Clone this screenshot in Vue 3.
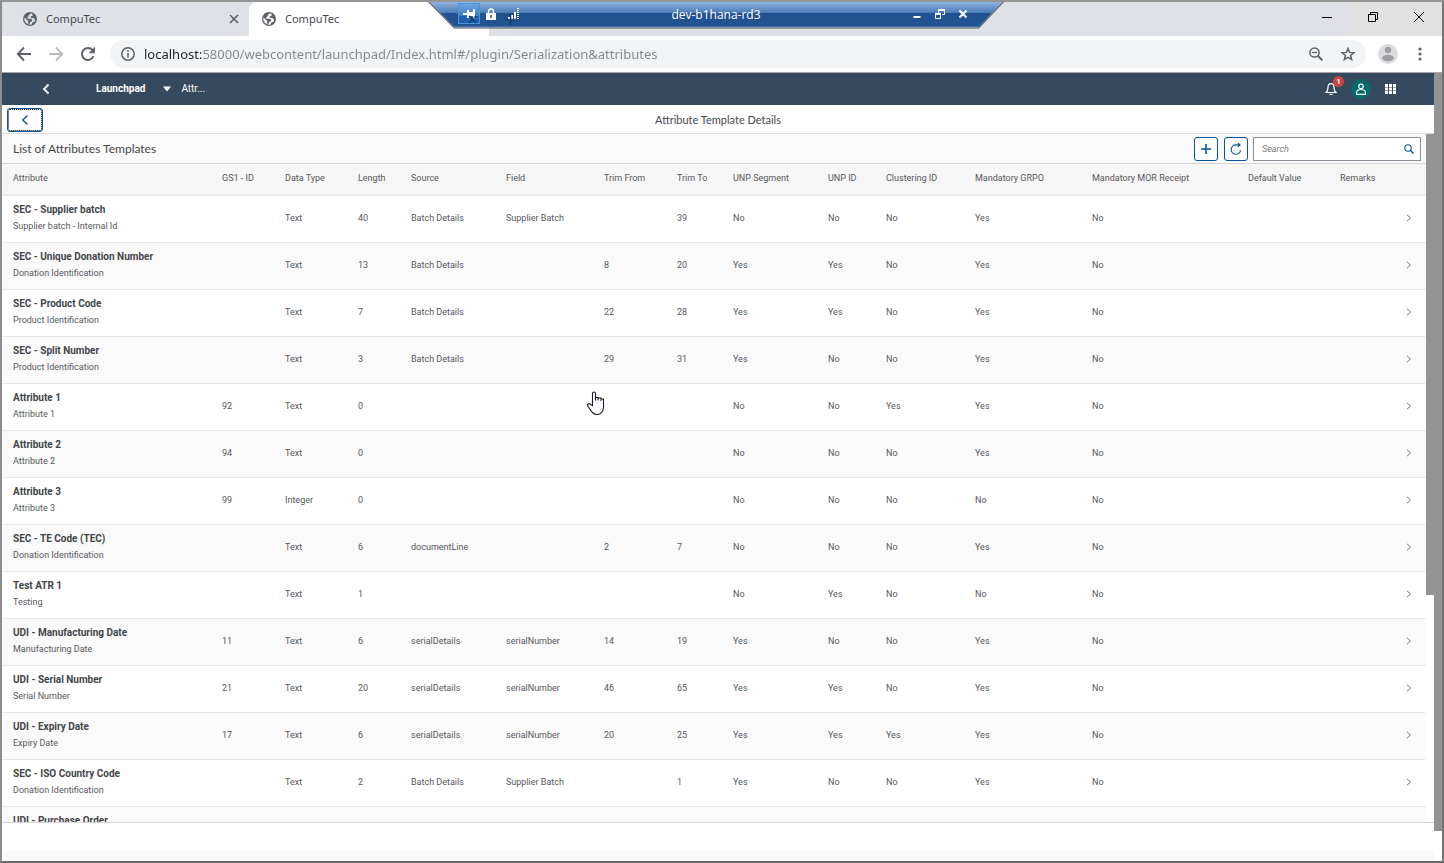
<script setup>
import { ref } from 'vue'

const address = ref('localhost:58000/webcontent/launchpad/Index.html#/plugin/Serialization&attributes')
const query = ref('')

const columns = [
  { label: 'Attribute', width: 216 },
  { label: 'GS1 - ID', width: 63 },
  { label: 'Data Type', width: 73 },
  { label: 'Length', width: 53 },
  { label: 'Source', width: 95 },
  { label: 'Field', width: 98 },
  { label: 'Trim From', width: 73 },
  { label: 'Trim To', width: 56 },
  { label: 'UNP Segment', width: 95 },
  { label: 'UNP ID', width: 58 },
  { label: 'Clustering ID', width: 89 },
  { label: 'Mandatory GRPO', width: 117 },
  { label: 'Mandatory MOR Receipt', width: 156 },
  { label: 'Default Value', width: 92 },
  { label: 'Remarks', width: 58 }
]

const rows = [
  ['SEC - Supplier batch', 'Supplier batch - Internal Id', '', 'Text', '40', 'Batch Details', 'Supplier Batch', '', '39', 'No', 'No', 'No', 'Yes', 'No'],
  ['SEC - Unique Donation Number', 'Donation Identification', '', 'Text', '13', 'Batch Details', '', '8', '20', 'Yes', 'Yes', 'No', 'Yes', 'No'],
  ['SEC - Product Code', 'Product Identification', '', 'Text', '7', 'Batch Details', '', '22', '28', 'Yes', 'Yes', 'No', 'Yes', 'No'],
  ['SEC - Split Number', 'Product Identification', '', 'Text', '3', 'Batch Details', '', '29', '31', 'Yes', 'No', 'No', 'Yes', 'No'],
  ['Attribute 1', 'Attribute 1', '92', 'Text', '0', '', '', '', '', 'No', 'No', 'Yes', 'Yes', 'No'],
  ['Attribute 2', 'Attribute 2', '94', 'Text', '0', '', '', '', '', 'No', 'No', 'No', 'Yes', 'No'],
  ['Attribute 3', 'Attribute 3', '99', 'Integer', '0', '', '', '', '', 'No', 'No', 'No', 'No', 'No'],
  ['SEC - TE Code (TEC)', 'Donation Identification', '', 'Text', '6', 'documentLine', '', '2', '7', 'No', 'No', 'No', 'Yes', 'No'],
  ['Test ATR 1', 'Testing', '', 'Text', '1', '', '', '', '', 'No', 'Yes', 'No', 'No', 'No'],
  ['UDI - Manufacturing Date', 'Manufacturing Date', '11', 'Text', '6', 'serialDetails', 'serialNumber', '14', '19', 'Yes', 'No', 'No', 'Yes', 'No'],
  ['UDI - Serial Number', 'Serial Number', '21', 'Text', '20', 'serialDetails', 'serialNumber', '46', '65', 'Yes', 'Yes', 'No', 'Yes', 'No'],
  ['UDI - Expiry Date', 'Expiry Date', '17', 'Text', '6', 'serialDetails', 'serialNumber', '20', '25', 'Yes', 'Yes', 'Yes', 'Yes', 'No'],
  ['SEC - ISO Country Code', 'Donation Identification', '', 'Text', '2', 'Batch Details', 'Supplier Batch', '', '1', 'Yes', 'No', 'No', 'Yes', 'No'],
  ['UDI - Purchase Order', '', '', '', '', '', '', '', '', '', '', '', '', '']
]
</script>

<template>
  <div class="window">
    <header class="tabs">
      <div class="tab">
        <svg class="globe" viewBox="0 0 14 14"><circle cx="7" cy="7" r="7" fill="#5f6368" /><path d="M7.500 1.400L5.600 3.600l-.4 1.500-1.400.6 1 1h3.400l1.300 1.400-.9 1.500-1.600.3-.3 2.200-.9.5L5 10.400 5.200 9 1.500 5.600 1.300 8l1.600 2.900L6.500 12.700l2.200-.3.6-1.800 2.500-1.100.2-2-1.600-1.500H8L7.600 4.600l1.900-.9V1.800z" fill="#dee1e6" /></svg>
        <button class="tab-name">CompuTec</button>
        <button class="tab-close" aria-label="Close tab"><svg viewBox="0 0 10 10" width="10" height="10"><path d="M1 1l8 8M9 1l-8 8" stroke="#5f6368" stroke-width="1.600" /></svg></button>
      </div>
      <div class="tab active">
        <svg class="globe" viewBox="0 0 14 14"><circle cx="7" cy="7" r="7" fill="#5f6368" /><path d="M7.500 1.400L5.600 3.600l-.4 1.500-1.400.6 1 1h3.400l1.300 1.400-.9 1.500-1.600.3-.3 2.200-.9.5L5 10.400 5.200 9 1.500 5.600 1.300 8l1.600 2.900L6.500 12.700l2.200-.3.6-1.800 2.500-1.100.2-2-1.600-1.500H8L7.600 4.600l1.900-.9V1.800z" fill="#fff" /></svg>
        <button class="tab-name">CompuTec</button>
      </div>
      <div class="window-controls">
        <button aria-label="Minimize"><svg viewBox="0 0 12 12" width="12" height="12"><path d="M1 6.500h10" stroke="#000" /></svg></button>
        <button aria-label="Restore"><svg viewBox="0 0 12 12" width="12" height="12" fill="none" stroke="#000"><path d="M1.500 3.500h7v7h-7zM3.500 3V1.500h7v7H9" /></svg></button>
        <button aria-label="Close"><svg viewBox="0 0 12 12" width="12" height="12"><path d="M1 1l10 10M11 1L1 11" stroke="#000" /></svg></button>
      </div>
    </header>

    <div class="browser-bar">
      <button class="nav" aria-label="Back"><svg viewBox="0 0 16 16" width="16" height="16" fill="none" stroke="#5f6368" stroke-width="1.900"><path d="M15 8H2.500M8 1.500L1.800 8 8 14.500" /></svg></button>
      <button class="nav" aria-label="Forward"><svg viewBox="0 0 16 16" width="16" height="16" fill="none" stroke="#babcbe" stroke-width="1.900"><path d="M1 8h12.500M8 1.500L14.200 8 8 14.500" /></svg></button>
      <button class="nav" aria-label="Reload"><svg viewBox="0 0 16 16" width="16" height="16"><path d="M13.500 10.200A6 6 0 1 1 12.400 3.900L13.600 5.200" fill="none" stroke="#5f6368" stroke-width="2" /><path d="M15 .8v6.400H8.600z" fill="#5f6368" /></svg></button>
      <div class="omnibox">
        <svg viewBox="0 0 14 14" width="14" height="14"><circle cx="7" cy="7" r="6.200" fill="none" stroke="#5f6368" stroke-width="1.500" /><path d="M7 6v4.500M7 3.300v1.600" stroke="#5f6368" stroke-width="1.600" /></svg>
        <input v-model="address" class="address" type="text" aria-label="Address" />
        <button aria-label="Zoom"><svg viewBox="0 0 14 14" width="14" height="14" fill="none" stroke="#5f6368"><circle cx="5.500" cy="5.500" r="4.600" stroke-width="1.500" /><path d="M8.800 8.800l4.500 4.500" stroke-width="2" /><path d="M3 5.500h5" stroke-width="1.300" /></svg></button>
        <button aria-label="Bookmark"><svg viewBox="0 0 14 14" width="14" height="14"><path d="M7 1.500l1.600 3.900 4.200.3-3.200 2.700 1 4.100L7 10.300l-3.600 2.200 1-4.100L1.200 5.700l4.200-.3z" fill="none" stroke="#5f6368" stroke-width="1.500" /></svg></button>
      </div>
      <button class="profile" aria-label="Profile"><svg viewBox="0 0 20 20" width="20" height="20"><circle cx="10" cy="10" r="10" fill="#dadce0" /><circle cx="10" cy="6" r="3.200" fill="#9e9fa1" /><ellipse cx="10" cy="14" rx="5.800" ry="3.200" fill="#9e9fa1" /></svg></button>
      <button class="menu" aria-label="Menu"><svg viewBox="0 0 4 14" width="4" height="14" fill="#5f6368"><circle cx="2" cy="2" r="1.600" /><circle cx="2" cy="7" r="1.600" /><circle cx="2" cy="12" r="1.600" /></svg></button>
    </div>

    <div class="viewport">
      <main class="page">
        <nav class="shell">
          <button class="shell-back" aria-label="Back"><svg viewBox="0 0 8 12" width="8" height="12"><path d="M6.500 1.500L2 6l4.500 4.500" fill="none" stroke="#fff" stroke-width="1.800" /></svg></button>
          <button class="shell-home">Launchpad<svg viewBox="0 0 8 6" width="8" height="6"><path d="M0 .5h8L4 5.500z" fill="#fff" /></svg></button>
          <button class="shell-crumb">Attr...</button>
          <div class="shell-tools">
            <button class="bell" aria-label="Notifications"><svg viewBox="0 0 12 14" width="12" height="14" fill="none" stroke="#fff" stroke-width="1.200"><path d="M1 10.500c1.500-1 2-2 2-5C3 3 4 1.600 6 1.600S9 3 9 5.500c0 3 .5 4 2 5z" /><path d="M4.500 12.400h3" /></svg><span class="badge">1</span></button>
            <button class="user" aria-label="User"><svg viewBox="0 0 12 12" width="12" height="12" fill="none" stroke="#fff" stroke-width="1.200"><circle cx="6" cy="3.400" r="2.300" /><path d="M1.600 11.300V9.500C1.600 7.500 3 6.500 6 6.500s4.400 1 4.400 3v1.800z" /></svg></button>
            <button aria-label="Products"><svg viewBox="0 0 11 10" width="11" height="10" fill="#fff"><path d="M0 0h3v3H0zM4 0h3v3H4zM8 0h3v3H8zM0 3.500h3v3H0zM4 3.500h3v3H4zM8 3.500h3v3H8zM0 7h3v3H0zM4 7h3v3H4zM8 7h3v3H8z" /></svg></button>
          </div>
        </nav>

        <div class="page-head">
          <button class="page-back" aria-label="Navigate back"><svg viewBox="0 0 8 12" width="8" height="12"><path d="M6.500 1.500L1.800 6l4.700 4.500" fill="none" stroke="#0854a0" stroke-width="1.400" /></svg></button>
          <h1>Attribute Template Details</h1>
        </div>

        <div class="scroll-row">
          <section class="list">
            <div class="list-bar">
              <h2>List of Attributes Templates</h2>
              <button class="tool" aria-label="Add"><svg viewBox="0 0 12 12" width="12" height="12"><path d="M6 1v10M1 6h10" stroke="#0854a0" stroke-width="1.600" /></svg></button>
              <button class="tool" aria-label="Refresh"><svg viewBox="0 0 12 12" width="12" height="12" fill="none" stroke="#0854a0" stroke-width="1.100"><path d="M10.600 7.400A4.700 4.700 0 1 1 6 1.900h3.800M7.900 0l2.200 1.900-2.200 2" /></svg></button>
              <div class="search">
                <input v-model="query" type="search" placeholder="Search" aria-label="Search" />
                <button aria-label="Start search"><svg viewBox="0 0 12 12" width="10" height="10" fill="none" stroke="#0854a0"><circle cx="4.800" cy="4.800" r="3.900" stroke-width="1.300" /><path d="M7.600 7.600l3.700 3.700" stroke-width="1.800" /></svg></button>
              </div>
            </div>
            <table>
              <colgroup>
                <col v-for="c in columns" :key="c.label" :style="{ width: c.width + 'px' }" />
                <col class="nav-col" />
              </colgroup>
              <thead>
                <tr>
                  <th v-for="c in columns" :key="c.label" scope="col">{{ c.label }}</th>
                  <td></td>
                </tr>
              </thead>
              <tbody>
                <tr v-for="r in rows" :key="r[0]">
                  <td>
                    <strong>{{ r[0] }}</strong>
                    <span class="sub">{{ r[1] }}</span>
                  </td>
                  <td v-for="(v, i) in r.slice(2)" :key="i">{{ v }}</td>
                  <td></td>
                  <td></td>
                  <td class="go"><button :aria-label="'Open ' + r[0]"><svg viewBox="0 0 6 8" width="6" height="8"><path d="M1 .8L4.500 4 1 7.200" fill="none" stroke="#777" /></svg></button></td>
                </tr>
              </tbody>
            </table>
          </section>
          <div class="track"><div class="thumb inner"></div></div>
        </div>
        <footer class="foot"></footer>
      </main>
      <div class="track outer-track"><div class="thumb outer"></div></div>
    </div>

    <div class="remote">
      <svg class="remote-shape" viewBox="0 0 575 29" preserveAspectRatio="none">
        <defs>
          <linearGradient id="remote-fill" x1="0" y1="0" x2="0" y2="1">
            <stop offset="0" stop-color="#8fb3de" />
            <stop offset=".46" stop-color="#4679b4" />
            <stop offset=".46" stop-color="#215190" />
            <stop offset="1" stop-color="#225492" />
          </linearGradient>
        </defs>
        <path d="M0 0h575l-25 28.500H26z" fill="#5b5b63" />
        <path d="M1.500 0h572l-24 27.500H26.500z" fill="#9dbbe0" />
        <path d="M2 0h571l-23 26.500H26z" fill="url(#remote-fill)" />
      </svg>
      <div class="remote-left">
        <button class="pin" aria-label="Pin"><svg viewBox="0 0 12 10" width="12" height="10" fill="#fff"><path d="M0 4h4v2H0zM4 1h2v8H4zM6 3h4v4H6zM10 0h2v10h-2z" /></svg></button>
        <svg viewBox="0 0 10 12" width="10" height="12"><path d="M2.500 5V3.500a2.500 2.500 0 0 1 5 0V5" fill="none" stroke="#fff" stroke-width="1.500" /><path d="M0 5h10v7H0z" fill="#fff" /><path d="M5 7v3" stroke="#215190" stroke-width="1.500" /></svg>
        <svg viewBox="0 0 12 12" width="12" height="12" fill="#fff"><path d="M0 9h2v3H0zM3 7h2v5H3zM6 4h2v8H6z" /><path d="M10 0v12" stroke="#fff" stroke-width="2" stroke-dasharray="1 1" /></svg>
        <svg class="ghost" viewBox="0 0 60 12" width="60" height="12" stroke="#123463" stroke-opacity=".8" stroke-width="1.600"><path d="M3 3l7 7M10 3l-7 7M39 6.500h11M44.500 1v11" /></svg>
      </div>
      <span class="remote-name">dev-b1hana-rd3</span>
      <div class="remote-right">
        <button aria-label="Minimize session"><svg viewBox="0 0 10 10" width="10" height="10"><path d="M1.500 8h7" stroke="#fff" stroke-width="2" /></svg></button>
        <button aria-label="Restore session"><svg viewBox="0 0 10 10" width="10" height="10" fill="none" stroke="#fff"><path d="M.5 5.500h5v4h-5zM3.500 4V1.500h6v4H7" /><path d="M0 5h6M3 1h7" stroke-width="2" /></svg></button>
        <button aria-label="Close session"><svg viewBox="0 0 10 10" width="10" height="10"><path d="M1.500 1.500l7 7M8.500 1.500l-7 7" stroke="#fff" stroke-width="2" /></svg></button>
      </div>
    </div>

    <svg class="pointer" viewBox="0 0 18 24" width="18" height="24"><path d="M5.500 14.500V2.500a1.500 1.500 0 0 1 3 0v7-3h2.500v3-2.500h3v3-2h2.500V16c0 4-2.500 7.500-6.500 7.500S4.500 20.500.8 15c-.8-1.300.2-3 2.200-2z" fill="#fff" stroke="#1a1a2e" stroke-width="1.100" /></svg>
  </div>
</template>

<style>
body {
  margin: 0;
}
</style>

<style scoped>
* {
  box-sizing: border-box;
}

button {
  display: flex;
  align-items: center;
  justify-content: center;
  padding: 0;
  border: 0;
  background: none;
  font: inherit;
  color: inherit;
}

svg {
  display: block;
  flex: none;
}

.window {
  position: relative;
  display: flex;
  flex-direction: column;
  height: 100vh;
  overflow: hidden;
  border: 2px solid;
  border-color: #969696 #757575 #6b6b6b #8c8c8c;
  background: #fff;
  color: #55585b;
  font: 9px/12px Roboto, "Liberation Sans", sans-serif;
}

.tabs {
  display: flex;
  height: 34px;
  background: #dee1e6;
  color: #45494d;
  font: 11px/16px "Noto Sans", "Open Sans", sans-serif;
}

.tab {
  display: flex;
  align-items: center;
  gap: 9px;
  width: 247px;
  padding: 0 10px 0 21px;
}

.tab.active {
  width: 240px;
  padding-left: 13px;
  border-radius: 8px 8px 0 0;
  background: #fff;
}

.globe {
  width: 14px;
  height: 14px;
}

.tab-close {
  margin-left: auto;
}

.window-controls {
  display: flex;
  margin-left: auto;
  background: #e1e1e1;
}

.window-controls button {
  width: 46px;
  padding-bottom: 4px;
}

.window-controls button:first-child {
  background: #dee1e6;
}

.browser-bar {
  display: flex;
  align-items: center;
  height: 37px;
  padding: 0 20px 1px 14px;
  border-bottom: 1px solid #a9a5a8;
}

.nav {
  width: 16px;
  height: 16px;
  margin-right: 16px;
}

.omnibox {
  display: flex;
  flex: 1;
  align-items: center;
  gap: 18px;
  height: 28px;
  margin: 0 12px 0 -2px;
  padding: 0 11px;
  border-radius: 14px;
  background: #f1f3f4;
}

.address {
  flex: 1;
  min-width: 0;
  margin-left: -9px;
  padding: 0;
  border: 0;
  background: linear-gradient(90deg, #202124 57px, #80868b 57px);
  background-clip: text;
  -webkit-text-fill-color: transparent;
  font: 13px/20px "Noto Sans", "Open Sans", sans-serif;
}

.profile {
  margin-right: 20px;
}

.viewport,
.scroll-row {
  display: flex;
  flex: 1;
  min-height: 0;
}

.page {
  display: flex;
  flex: 1;
  flex-direction: column;
  min-width: 0;
}

.track {
  width: 8px;
  background: #fff;
}

.outer-track {
  padding-bottom: 30px;
}

.thumb {
  background: #939393;
}

.inner {
  height: 67%;
}

.outer {
  height: 100%;
}

.shell {
  display: flex;
  align-items: center;
  height: 32px;
  padding: 0 38px 0 40px;
  background: #354a5f;
  color: #fff;
}

.shell-home {
  gap: 18px;
  margin-left: 46px;
  font-size: 10px;
  font-weight: 700;
}

.shell-crumb {
  margin-left: 10px;
  font-size: 10px;
}

.shell-tools {
  display: flex;
  align-items: center;
  gap: 14px;
  margin-left: auto;
}

.bell {
  position: relative;
}

.badge {
  position: absolute;
  top: -6px;
  left: 8px;
  width: 11px;
  height: 11px;
  border-radius: 6px;
  background: #d04343;
  font: 700 8px/11px Roboto, sans-serif;
  text-align: center;
}

.user {
  width: 20px;
  height: 20px;
  border-radius: 10px;
  background: #046a6b;
}

.page-head {
  display: grid;
  grid-template-columns: 36px 1fr 36px;
  align-items: center;
  height: 29px;
  padding: 1px 5px 0;
  border-bottom: 1px solid #dedede;
}

.page-back {
  height: 24px;
  border: 1px solid #0854a0;
  border-radius: 3px;
  outline: 1px dotted #000;
  outline-offset: -2px;
}

h1,
h2 {
  margin: 0;
  font-family: Lato, Roboto, sans-serif;
  font-weight: 400;
  color: #45484b;
}

h1 {
  font-size: 11px;
  line-height: 16px;
  text-align: center;
}

h2 {
  flex: 1;
  font-size: 12px;
  line-height: 16px;
}

.list {
  flex: 1;
  min-width: 0;
  overflow: hidden;
}

.list-bar {
  display: flex;
  align-items: center;
  height: 30px;
  padding: 0 5px 0 11px;
  border-bottom: 1px solid #d5d5d5;
  background: #fafafa;
}

.tool {
  width: 24px;
  height: 24px;
  margin-right: 6px;
  border: 1px solid #0854a0;
  border-radius: 3px;
  background: #fff;
}

.tool + .search {
  margin-left: -1px;
}

.search {
  display: flex;
  width: 168px;
  height: 24px;
  padding-right: 6px;
  border: 1px solid #89919a;
  background: #fff;
}

.search input {
  flex: 1;
  min-width: 0;
  padding: 0 0 0 8px;
  border: 0;
  background: none;
  font: inherit;
}

.search input::placeholder {
  color: #74777a;
  font-style: italic;
}

table {
  width: 100%;
  table-layout: fixed;
  border-collapse: separate;
  border-spacing: 0;
}

.nav-col {
  width: 32px;
}

th,
td {
  padding: 0 0 0 4px;
  border-bottom: 1px solid #e8e8e8;
  text-align: left;
  font-weight: 400;
  white-space: nowrap;
}

th:first-child,
td:first-child {
  padding-left: 11px;
}

thead th,
thead td {
  height: 32px;
  padding-bottom: 2px;
  border-bottom: 2px solid #ebebeb;
  background: #f6f6f6;
}

tbody td {
  height: 47px;
  padding-bottom: 3px;
}

tbody td:first-child {
  padding-bottom: 2px;
}

tbody tr:nth-child(even) {
  background: #fafafa;
}

strong,
.sub {
  display: block;
  height: 17px;
  line-height: 17px;
}

strong {
  color: #424548;
  font-size: 10px;
}

.go {
  padding-left: 12px;
}

.foot {
  height: 39px;
  border-top: 1px solid #d5d5d5;
  background: linear-gradient(#fff 28px, #fafafa 28px);
}

.remote {
  position: absolute;
  top: 0;
  left: 426px;
  display: grid;
  grid-template-columns: 1fr auto 1fr;
  width: 576px;
  height: 27px;
  color: #fff;
  font: 12px/25px "Open Sans", "Noto Sans", sans-serif;
}

.remote-shape {
  position: absolute;
  width: 576px;
  height: 27px;
}

.ghost {
  position: absolute;
  top: 11px;
  left: 38px;
}

.remote-left,
.remote-name,
.remote-right {
  position: relative;
}

.remote-left {
  display: flex;
  align-items: center;
  gap: 12px;
  height: 23px;
  padding-left: 30px;
}

.pin {
  width: 22px;
  height: 21px;
  margin-right: -6px;
  border: 1px solid #4a94e0;
  background: linear-gradient(#6fa5df, #3f7cc4 12px, #2461ad 12px);
}

.remote-right {
  display: flex;
  align-items: center;
  justify-content: flex-end;
  gap: 13px;
  height: 23px;
  padding-right: 36px;
}

.pointer {
  position: absolute;
  top: 389px;
  left: 585px;
}
</style>
